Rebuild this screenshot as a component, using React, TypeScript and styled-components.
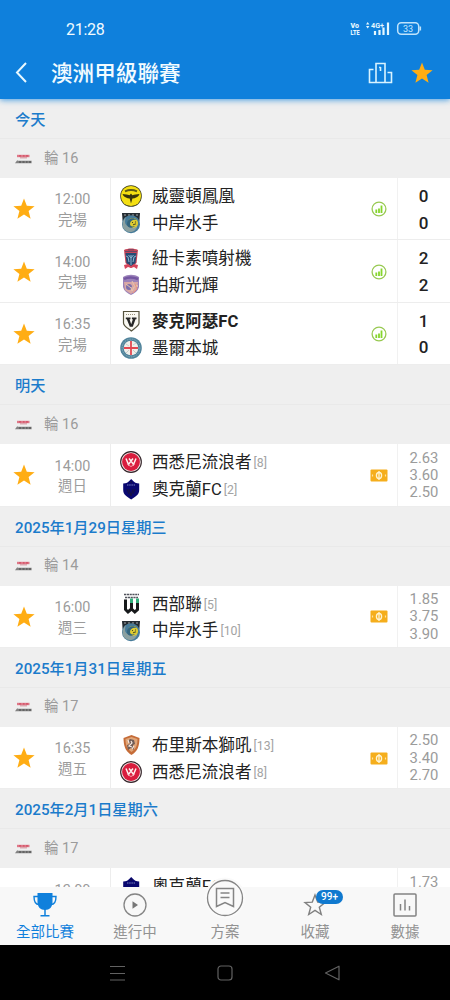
import React from "react";
import styled, { createGlobalStyle } from "styled-components";

const GlobalStyle = createGlobalStyle`
  * {
    box-sizing: border-box;
  }

  body {
    margin: 0;
    background: #000;
    font-family: Roboto, "Noto Sans CJK TC", sans-serif;
  }
`;

const blue = "#0f80dc";
const grey = "#9b9b9b";
const amber = "#ffad14";

const Screen = styled.div`
  display: flex;
  flex-direction: column;
  width: 450px;
  height: 1000px;
  overflow: hidden;
  background: #fff;
`;

const Header = styled.header`
  flex: none;
  height: 99px;
  background: ${blue};
  color: #f2fbff;
  box-shadow: 0 1px 6px rgba(15, 128, 220, 0.75);
  z-index: 1;
`;

const StatusBar = styled.div`
  display: flex;
  align-items: center;
  justify-content: space-between;
  height: 48px;
  padding: 10px 28px 0 66px;
  font-size: 16px;
`;

const Clock = styled.span`
  letter-spacing: -0.3px;
`;

const TitleBar = styled.div`
  display: flex;
  align-items: center;
  height: 50px;
  padding: 0 17px 0 13px;
`;

const Title = styled.h1`
  flex: 1;
  margin: 1px 0 0 22px;
  font-size: 21.6px;
  line-height: 32px;
  font-weight: 500;
`;

const TitleIcons = styled.div`
  display: flex;
  align-items: center;
  gap: 18px;
`;

const List = styled.main`
  flex: none;
  height: 788px;
  overflow: hidden;
`;

const DateRow = styled.div`
  height: 40.2px;
  padding: 1px 15px 0;
  border-bottom: 1px solid #e9e9e9;
  background: #efefef;
  color: #1b7bcb;
  font-size: 15.2px;
  font-weight: 500;
  line-height: 40px;
`;

const RoundRow = styled.div`
  display: flex;
  align-items: center;
  gap: 12px;
  height: 38.8px;
  padding-left: 15px;
  background: #efefef;
  color: ${grey};
  font-size: 14.5px;
  line-height: 38px;
`;

const MatchRow = styled.div`
  display: flex;
  height: 62.4px;
  background: #fff;
  border-bottom: 1px solid #ededed;
`;

const StarCell = styled.div`
  display: flex;
  align-items: center;
  width: 35px;
  padding: 1px 0 0 13px;
`;

const TimeCell = styled.div`
  display: flex;
  flex-direction: column;
  align-items: center;
  width: 76px;
  padding-top: 12.4px;
  border-right: 1px solid #ededed;
  color: ${grey};
  font-size: 14.4px;
  line-height: 20.6px;
`;

const Teams = styled.div`
  flex: 1;
  padding: 5px 0 0 9px;
`;

const Team = styled.div<{ $bold?: boolean }>`
  display: flex;
  align-items: center;
  height: 26.7px;
  color: #222;
  font-size: 16.6px;
  font-weight: ${(p) => (p.$bold ? 700 : 400)};
  line-height: 26px;
  white-space: nowrap;

  svg {
    margin-right: 10px;
  }
`;

const Name = styled.span`
  padding-top: 1.4px;
`;

const Rank = styled.span`
  margin-left: 2px;
  padding-top: 1.4px;
  color: #a3a3a3;
  font-size: 12.3px;
`;

const MarkCell = styled.div`
  display: flex;
  align-items: center;
  justify-content: center;
  width: 36px;
  padding: 1px 1px 0 0;
  border-right: 1px solid #f1f1f1;
`;

const Scores = styled.div`
  width: 52px;
  padding: 5px 1px 0 0;
  color: #222;
  font-size: 17px;
  font-weight: 500;
  line-height: 26.6px;
  text-align: center;
`;

const Odds = styled.div`
  width: 52px;
  padding-top: 5.6px;
  color: ${grey};
  font-size: 14.8px;
  line-height: 17.2px;
  text-align: center;
`;

const TabBar = styled.nav`
  display: flex;
  flex: none;
  height: 58px;
  background: #f8f8f8;
  z-index: 1;
`;

const Tab = styled.div<{ $active?: boolean }>`
  position: relative;
  display: flex;
  flex: 1;
  flex-direction: column;
  align-items: center;
  justify-content: flex-end;
  padding-bottom: 2px;
  color: ${(p) => (p.$active ? blue : "#929292")};
  font-size: 14.5px;
  line-height: 21px;

  svg {
    flex: none;
    margin-bottom: 5px;
  }
`;

const PlanTab = styled(Tab)`
  svg {
    margin-bottom: 5px;
    overflow: visible;
  }
`;

const Badge = styled.span`
  position: absolute;
  top: 3px;
  left: 46px;
  width: 27px;
  height: 14px;
  border-radius: 7px;
  background: #1079cf;
  color: #fff;
  font-size: 10px;
  font-weight: 500;
  line-height: 14px;
  text-align: center;
`;

const SystemBar = styled.div`
  display: flex;
  flex: none;
  align-items: center;
  justify-content: space-between;
  height: 55px;
  padding: 0 109px;
  background: #000;
`;

const Star = ({ size = 22 }: { size?: number }) => (
  <svg width={size} height={size} viewBox="0 0 22 22">
    <path
      fill={amber}
      d="M11 .5l2.8 7.3 7.8.4-6 4.8 2 7.8-6.6-4.4-6.600 4.400 2-7.800L.4 8.200l7.800-.4z"
    />
  </svg>
);

const LeagueLogo = () => (
  <svg width="17" height="10" viewBox="0 0 17 10">
    <path d="M2 .8h12.500v2.400H2z" fill="#df7888" />
    <path d="M5 3.200h7v1.200H5z" fill="#d69aa3" />
    <path d="M4 1.900h2M8 1.900h1.500M11 1.900h2" stroke="#c93850" strokeWidth=".8" />
    <path d="M0 9.200L2.200 6.200 3 6.800h13.600v2.400z" fill="#838383" />
    <path d="M4 8h2M7.500 8h2M11 8h1.500M14 8h2" stroke="#484848" />
  </svg>
);

const StatusIcons = () => (
  <svg width="72" height="16" viewBox="0 0 72 16" fill="none">
    <g fill="#e4f7ff" fontFamily="Roboto" fontWeight="900">
      <text x="0.5" y="6.8" fontSize="8" textLength="8.500" lengthAdjust="spacingAndGlyphs">Vo</text>
      <text x="0.5" y="13.6" fontSize="8" textLength="9" lengthAdjust="spacingAndGlyphs">LTE</text>
      <text x="21" y="6.8" fontSize="8" fontWeight="700" textLength="13" lengthAdjust="spacingAndGlyphs">4G+</text>
    </g>
    <path d="M16 3.500L17.700 1l1.700 2.500zM16 5l1.700 2.500L19.400 5z" fill="#e4f7ff" />
    <path
      d="M25 10v4M29.500 9v5M33.500 6.500V14M38 1.500V14"
      stroke="#e4f7ff"
      strokeWidth="2.200"
    />
    <rect x="47.700" y="1.700" width="21" height="11.500" rx="3.500" stroke="#bfe3fb" strokeWidth="1.500" />
    <path d="M70.300 5.500v4" stroke="#bfe3fb" strokeWidth="1.600" />
    <text x="53" y="10.800" fontSize="9" fontFamily="Roboto" fill="#c8e8fc">33</text>
  </svg>
);

const Phoenix = () => (
  <>
    <circle cx="11" cy="11" r="10.800" fill="#3b3b1c" />
    <circle cx="11" cy="11" r="10.100" fill="#f4df12" />
    <path d="M5 6.300c3.500-1.500 8.500-1.500 12 0" stroke="#5d5a16" strokeWidth="2" fill="none" />
    <path
      d="M2.500 9c3 .1 5 .8 7 1.200L11 8.500l1.400 1.700c2-.4 4.100-1.100 7.100-1.200-1 2.600-2.700 3.500-5 4.200l-2.100.3L11 18.500l-1.300-5-2.100-.3C5.300 12.500 3.500 11.600 2.500 9z"
      fill="#37340d"
    />
  </>
);

const Mariners = () => (
  <>
    <path d="M2 1h18l-.6 8H2.600z" fill="#242c32" />
    <path d="M4 3h2M8 3h2M12 3h2M16 3h2" stroke="#a4a8a9" strokeWidth="1.100" />
    <circle cx="11" cy="12.200" r="9" fill="#467b99" />
    <path d="M4 17A9 9 0 0 1 6 5c-2 5-1 9 4 10 5 .8 7-3 5-6 5 4 1 11-5 11-3 0-5-1.500-6-3z" fill="#8ba0a0" />
    <circle cx="13" cy="11" r="5.100" fill="#ddcb30" />
    <path d="M7 12c0-5 6-8 10-4-4-1-7 1-7 4 0 2 2 3 5 2-3 3-8 2-8-2z" fill="#34657d" />
    <path d="M12 10.500h1M15 10h1M13 12.800l3-1" stroke="#484a28" />
  </>
);

const Jets = () => (
  <>
    <path d="M4 2c4-2 10-2 14 0l-1.500 13L11 20l-5.500-5z" fill="#c74458" />
    <path d="M5.500 5h11L15.500 15 11 18.500 6.500 15z" fill="#274b74" />
    <path d="M6 8l2 1 1 5M16 8l-2 1-1 5M11 7v10M8.500 7l2.500 3 2.500-3" stroke="#8eb7cf" fill="none" />
    <path d="M5 3.500h12M8 1.800h6" stroke="#6e4562" />
    <path d="M4 17l4-1 3 2 3-2 4 1-1 4-3-2-3 1-3-1-3 2z" fill="#d7455c" />
  </>
);

const Glory = () => (
  <>
    <path d="M3 3c5-3 11-3 16 0v10c-1 4-4 6-8 8-4-2-7-4-8-8z" fill="#9b82b9" />
    <path d="M4 8h14l-1 7-6 5-6-4z" fill="#d9a8a5" />
    <path d="M4 5c4-2 9-2 14 0" stroke="#7557a1" strokeWidth="2.500" fill="none" />
    <circle cx="9" cy="13" r="3" fill="#7c70ac" />
    <path d="M12 7l2 4 4 1-4 1-2 4-1-4M6 10l5 4" stroke="#e9c4ab" fill="none" />
    <path d="M15 10l2 5-4 4" stroke="#e9937f" fill="none" />
  </>
);

const Macarthur = () => (
  <>
    <path d="M3.500 1.500h15.500v11.500c0 3-4 5-7.700 8-3.800-3-7.800-5-7.800-8z" fill="#faf9f2" stroke="#55523d" strokeWidth="1.200" />
    <path d="M6 4.500h10" stroke="#98917c" strokeDasharray="1 1" />
    <path d="M5.800 7.500h4.700v1.700h-1l1.700 5 1.700-5h-1V7.500h4.600v1.700h-1l-2.700 7.600h-3L6.800 9.200h-1z" fill="#272727" />
  </>
);

const City = () => (
  <>
    <circle cx="11" cy="11" r="10.800" fill="#50839b" />
    <circle cx="11" cy="11" r="8.900" fill="none" stroke="#86acba" strokeWidth="1" strokeDasharray="1.500 1" />
    <circle cx="11" cy="11" r="7.300" fill="#f0eeea" />
    <path d="M11 4v14M4 11h14" stroke="#e34751" strokeWidth="1.800" />
    <path d="M6 7l3 2M13 13l3 3M13 8l3-2M6 16l3-3" stroke="#c6cec9" />
  </>
);

const Wanderers = () => (
  <>
    <circle cx="11" cy="11" r="10.900" fill="#302126" />
    <circle cx="11" cy="11" r="9.800" fill="#f0e6e5" />
    <circle cx="11" cy="11" r="8.900" fill="#d91d3e" />
    <path d="M6 7.500l2.500 6 2.500-3.500 2.500 3.500 2.500-6M9 7.500l2 2.500 2-2.500" stroke="#fff0ef" strokeWidth="1.500" fill="none" />
    <path d="M7.500 13.500L11 15.500l3.500-2" stroke="#f3a9b1" fill="none" />
  </>
);

const Auckland = () => (
  <>
    <path d="M3.200 5.500c3 0 5-1 7-3.500l1-1 1 1c2 2.500 4 3.500 7 3.500V12c0 5-4 6.500-8 9.500-4-3-8-4.500-8-9.500z" fill="#09076f" />
    <path d="M7 7h8" stroke="#7b83c0" strokeDasharray="1.500 .7" />
    <path d="M11.200 3v2M9 11l2 7 2-7M7 11l2 5M15 11l-2 5" stroke="#151141" fill="none" />
  </>
);

const WesternUnited = () => (
  <>
    <path d="M4 1.500h15M5 4.500h13" stroke="#51535c" strokeWidth="1.600" strokeDasharray="2.200 .6" />
    <path d="M5.500 6.500v10L8 19l3.500-3V6.500M11.500 16l3.300 3 2.700-2.500v-10" stroke="#17191b" strokeWidth="3" fill="none" />
    <path d="M11.500 5.500V10M17.500 5.500V10" stroke="#31af7c" strokeWidth="3" />
  </>
);

const Roar = () => (
  <>
    <path d="M11.500 1l8 3c-.2 8-1.500 13-8 17C5 17 3.700 12 3.500 4z" fill="#c56c38" />
    <path d="M11.500 3l6 2c0 6-1.500 10-6 13-4.500-3-6-7-6-13z" fill="#e0a578" />
    <path d="M10 5l4 1 1 4-2 1 1 5-3-2-3 2-1-5 3-1-2-3z" fill="#705c56" />
    <path d="M11 7l1 2-3 3 3 1M8 6l1 3M14 12l-2 3" stroke="#f6e7df" strokeWidth="1.200" fill="none" />
  </>
);

const crests = {
  phoenix: Phoenix,
  mariners: Mariners,
  jets: Jets,
  glory: Glory,
  macarthur: Macarthur,
  city: City,
  wanderers: Wanderers,
  auckland: Auckland,
  western: WesternUnited,
  roar: Roar
};

type Side = {
  crest: keyof typeof crests;
  name: string;
  rank?: number;
  bold?: boolean;
};

type MatchProps = {
  time: string;
  note?: string;
  teams: Side[];
  scores?: number[];
  odds?: string[];
};

const phoenix: Side = { crest: "phoenix", name: "威靈頓鳳凰" };
const mariners: Side = { crest: "mariners", name: "中岸水手" };
const wanderers: Side = { crest: "wanderers", name: "西悉尼流浪者", rank: 8 };
const auckland: Side = { crest: "auckland", name: "奧克蘭FC" };

const days: { date: string; round: number; matches: MatchProps[] }[] = [
  {
    date: "今天",
    round: 16,
    matches: [
      { time: "12:00", note: "完場", teams: [phoenix, mariners], scores: [0, 0] },
      {
        time: "14:00",
        note: "完場",
        teams: [
          { crest: "jets", name: "紐卡素噴射機" },
          { crest: "glory", name: "珀斯光輝" }
        ],
        scores: [2, 2]
      },
      {
        time: "16:35",
        note: "完場",
        teams: [
          { crest: "macarthur", name: "麥克阿瑟FC", bold: true },
          { crest: "city", name: "墨爾本城" }
        ],
        scores: [1, 0]
      }
    ]
  },
  {
    date: "明天",
    round: 16,
    matches: [
      {
        time: "14:00",
        note: "週日",
        teams: [wanderers, { ...auckland, rank: 2 }],
        odds: ["2.63", "3.60", "2.50"]
      }
    ]
  },
  {
    date: "2025年1月29日星期三",
    round: 14,
    matches: [
      {
        time: "16:00",
        note: "週三",
        teams: [{ crest: "western", name: "西部聯", rank: 5 }, { ...mariners, rank: 10 }],
        odds: ["1.85", "3.75", "3.90"]
      }
    ]
  },
  {
    date: "2025年1月31日星期五",
    round: 17,
    matches: [
      {
        time: "16:35",
        note: "週五",
        teams: [{ crest: "roar", name: "布里斯本獅吼", rank: 13 }, wanderers],
        odds: ["2.50", "3.40", "2.70"]
      }
    ]
  },
  {
    date: "2025年2月1日星期六",
    round: 17,
    matches: [{ time: "12:00", teams: [auckland], odds: ["1.73"] }]
  }
];

const StatsMark = () => (
  <svg width="16" height="16" viewBox="0 0 16 16" fill="none">
    <circle cx="8" cy="8" r="6.900" stroke="#98c952" strokeWidth="1.300" />
    <path d="M5.300 8.500v3.500M8 7.500V12M10.500 4.500V12" stroke="#85d62c" strokeWidth="1.800" />
  </svg>
);

const OddsMark = () => (
  <svg width="18" height="13" viewBox="0 0 18 13" fill="none">
    <rect x=".5" y=".5" width="17" height="12" rx="1" fill="#f5ae1c" />
    <ellipse cx="9" cy="6.500" rx="2.600" ry="3" stroke="#fff4d2" strokeWidth="1.300" />
    <path d="M9 2v9" stroke="#fff4d2" strokeWidth="1.300" />
    <path d="M2.500 5.500v2M15.500 5.500v2" stroke="#ffe2a0" strokeWidth="1.200" />
  </svg>
);

const Match = ({ time, note, teams, scores, odds }: MatchProps) => (
  <MatchRow>
    <StarCell>
      <Star />
    </StarCell>
    <TimeCell>
      <span>{time}</span>
      {note && <span>{note}</span>}
    </TimeCell>
    <Teams>
      {teams.map(({ crest, name, rank, bold }) => {
        const Crest = crests[crest];
        return (
          <Team key={name} $bold={bold}>
            <svg width="22" height="22" viewBox="0 0 22 22">
              <Crest />
            </svg>
            <Name>{name}</Name>
            {rank && <Rank>[{rank}]</Rank>}
          </Team>
        );
      })}
    </Teams>
    <MarkCell>{scores ? <StatsMark /> : <OddsMark />}</MarkCell>
    {scores && (
      <Scores>
        {scores.map((score, i) => (
          <div key={i}>{score}</div>
        ))}
      </Scores>
    )}
    {odds && (
      <Odds>
        {odds.map((odd) => (
          <div key={odd}>{odd}</div>
        ))}
      </Odds>
    )}
  </MatchRow>
);

const App = () => (
  <>
    <GlobalStyle />
    <Screen>
      <Header>
        <StatusBar>
          <Clock>21:28</Clock>
          <StatusIcons />
        </StatusBar>
        <TitleBar>
          <svg width="16" height="24" viewBox="0 0 16 24" fill="none">
            <path d="M13 2L4 11.500 13 21" stroke="#e8f8ff" strokeWidth="2" />
          </svg>
          <Title>澳洲甲級聯賽</Title>
          <TitleIcons>
            <svg width="25" height="22" viewBox="0 0 25 22" fill="none" stroke="#d9f3ff" strokeWidth="1.600">
              <path d="M8 20.500V1.500h9v19M5.500 7.500H1.500v13h22v-10H19.500M12.500 5v4M11.300 5.800l1.200-.8" />
            </svg>
            <Star />
          </TitleIcons>
        </TitleBar>
      </Header>

      <List>
        {days.map(({ date, round, matches }) => (
          <section key={date}>
            <DateRow>{date}</DateRow>
            <RoundRow>
              <LeagueLogo />
              輪 {round}
            </RoundRow>
            {matches.map((match) => (
              <Match key={match.time} {...match} />
            ))}
          </section>
        ))}
      </List>

      <TabBar>
        <Tab $active>
          <svg width="24" height="25" viewBox="0 0 24 25" fill="none" stroke={blue}>
            <path d="M4.500 1h15v9c0 5-3 8-7.500 8s-7.500-3-7.500-8z" fill={blue} stroke="none" />
            <path d="M5 4.500H1c0 4 1 8 5 8M19 4.500h4c0 4-1 8-5 8" strokeWidth="1.400" />
            <path d="M12 17v6.500M7.500 23.700h9" strokeWidth="1.500" />
          </svg>
          全部比賽
        </Tab>
        <Tab>
          <svg width="24" height="24" viewBox="0 0 24 24" fill="none">
            <circle cx="12" cy="12" r="11" stroke="#858585" strokeWidth="1.300" />
            <path d="M9.500 8.200l5.500 3.800-5.500 3.800z" fill="#777" />
          </svg>
          進行中
        </Tab>
        <PlanTab>
          <svg width="38" height="38" viewBox="0 0 38 38" fill="none" stroke="#858585">
            <circle cx="19" cy="19" r="20.500" fill="#fafafa" stroke="none" />
            <circle cx="19" cy="19" r="17.500" strokeWidth="1.300" />
            <path d="M10.500 9.500h17v18L19 23.500l-8.500 4z" strokeWidth="1.500" />
            <path d="M14.500 14h9M14.500 18.500h9" strokeWidth="1.500" />
          </svg>
          方案
        </PlanTab>
        <Tab>
          <svg width="24" height="24" viewBox="0 0 24 24" fill="none">
            <path
              d="M12 2l2.700 7.100 7.300.4-5.700 4.700 2 7.300-6.300-4.100-6.300 4.100 2-7.300L2 9.500l7.300-.4z"
              stroke="#808080"
              strokeWidth="1.400"
            />
          </svg>
          <Badge>99+</Badge>
          收藏
        </Tab>
        <Tab>
          <svg width="24" height="24" viewBox="0 0 24 24" fill="none" stroke="#828282">
            <rect x="1" y="1" width="22" height="22" rx="1" strokeWidth="1.500" />
            <path d="M7.500 11v6.500M12 6.500v11M16.500 13v4.500" strokeWidth="1.500" />
          </svg>
          數據
        </Tab>
      </TabBar>

      <SystemBar>
        <svg width="17" height="18" viewBox="0 0 17 18" stroke="#626262">
          <path d="M1 2.500h15M1 9.500h15M1 16h15" />
        </svg>
        <svg width="16" height="16" viewBox="0 0 16 16" fill="none">
          <rect x="1" y="1" width="14" height="14" rx="3" stroke="#626262" strokeWidth="1.200" />
        </svg>
        <svg width="17" height="16" viewBox="0 0 17 16" fill="none">
          <path d="M15 1.200v13.600L1.500 8z" stroke="#626262" strokeWidth="1.200" strokeLinejoin="round" />
        </svg>
      </SystemBar>
    </Screen>
  </>
);

export default App;
